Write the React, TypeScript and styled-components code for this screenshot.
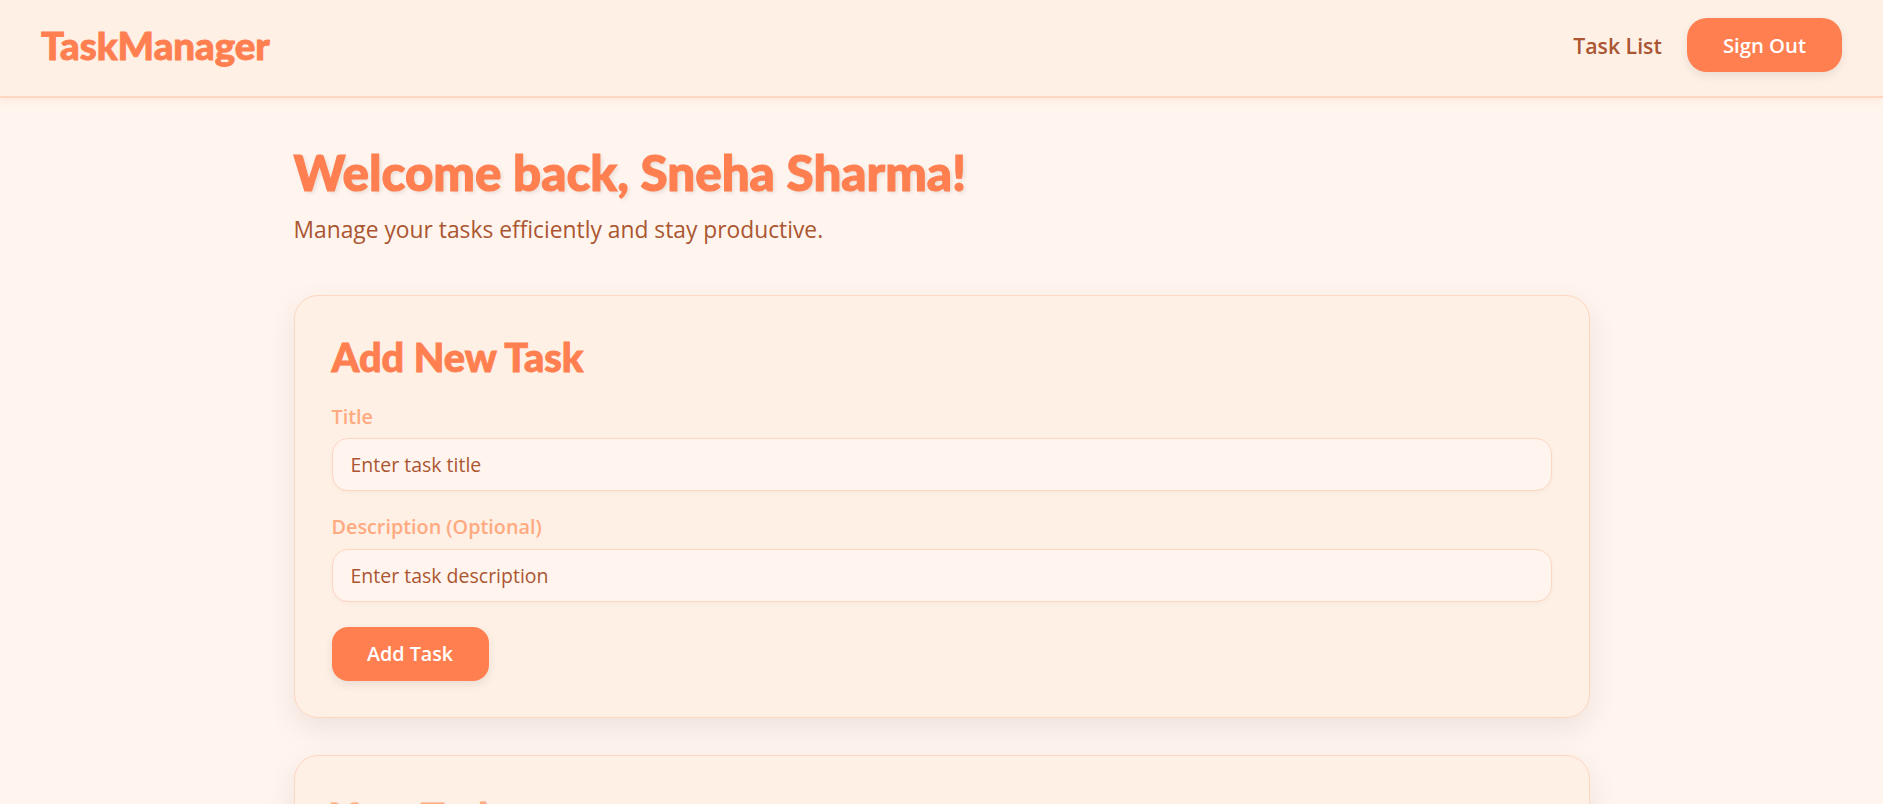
import React from "react";
import styled, { createGlobalStyle } from "styled-components";

const CORAL = "#ff7f50";
const SALMON = "#ffaa80";
const SIENNA = "#ab5632";
const PEACH_BORDER = "#ffd6c0";
const PANEL = "#fff0e6";
const PAGE = "#fff5ee";

const GlobalStyle = createGlobalStyle`
  * { box-sizing: border-box; }
  html, body { margin: 0; padding: 0; }
  body {
    background: ${PAGE};
    font-family: "Open Sans", "Noto Sans", sans-serif;
    color: ${SIENNA};
  }
`;

const Header = styled.header`
  display: flex;
  justify-content: space-between;
  align-items: center;
  padding: 18px 41px 24px 41px;
  background: ${PANEL};
  border-bottom: 2px solid ${PEACH_BORDER};
  box-shadow: 0 2px 8px rgba(255, 127, 80, 0.12);
`;

const Logo = styled.div`
  font-family: "Lato", "Open Sans", sans-serif;
  font-weight: 900;
  font-size: 38.4px;
  line-height: 1.2;
  color: ${CORAL};
  -webkit-text-stroke: 0.9px ${CORAL};
`;

const Nav = styled.nav`
  display: flex;
  align-items: center;
  gap: 25px;
`;

const NavLink = styled.a`
  font-weight: 600;
  font-size: 21.3px;
  color: ${SIENNA};
  text-decoration: none;
  cursor: pointer;
`;

const PrimaryButton = styled.button<{ $radius: number; $size: number; $padX: number }>`
  height: 54px;
  padding: 0 ${(p) => p.$padX}px;
  border: none;
  border-radius: ${(p) => p.$radius}px;
  background: ${CORAL};
  color: #ffffff;
  font-family: "Open Sans", "Noto Sans", sans-serif;
  font-weight: 600;
  font-size: ${(p) => p.$size}px;
  cursor: pointer;
  box-shadow: 0 4px 10px rgba(0, 0, 0, 0.08);
`;

const Main = styled.main`
  max-width: 1296px;
  margin: 0 auto;
  padding: 45px 0 60px;
`;

const Welcome = styled.h1`
  margin: 0;
  font-family: "Lato", "Open Sans", sans-serif;
  font-weight: 900;
  font-size: 49.3px;
  line-height: 1.2;
  color: ${CORAL};
  -webkit-text-stroke: 1.1px ${CORAL};
  text-shadow: 2px 2px 4px rgba(0, 0, 0, 0.1);
`;

const Subtitle = styled.p`
  margin: 10.6px 0 0;
  font-size: 22.8px;
  line-height: 1.5;
  color: ${SIENNA};
`;

const Card = styled.section<{ $gap: number }>`
  margin-top: ${(p) => p.$gap}px;
  background: ${PANEL};
  border: 1px solid ${PEACH_BORDER};
  border-radius: 24px;
  padding: 37px 37px 36px;
  box-shadow: 0 10px 30px rgba(0, 0, 0, 0.08);
`;

const CardTitle = styled.h2<{ $color: string }>`
  margin: 0 0 22px;
  font-family: "Lato", "Open Sans", sans-serif;
  font-weight: 900;
  font-size: 39.7px;
  line-height: 1.2;
  color: ${(p) => p.$color};
  -webkit-text-stroke: 0.9px ${(p) => p.$color};
`;

const Form = styled.form`
  display: flex;
  flex-direction: column;
  align-items: flex-start;
`;

const Field = styled.div`
  display: flex;
  flex-direction: column;
  width: 100%;
  margin-bottom: 22px;
`;

const Label = styled.label`
  font-weight: 600;
  font-size: 19.8px;
  line-height: 1.4;
  color: ${SALMON};
  margin-bottom: 8px;
`;

const Input = styled.input`
  width: 100%;
  height: 53px;
  padding: 0 18px;
  border: 1.5px solid ${PEACH_BORDER};
  border-radius: 16px;
  background: ${PAGE};
  font-family: "Open Sans", "Noto Sans", sans-serif;
  font-size: 19.5px;
  color: ${SIENNA};
  box-shadow: 0 2px 4px rgba(0, 0, 0, 0.03);
  outline: none;
  &::placeholder {
    color: ${SIENNA};
    opacity: 1;
  }
`;

const SubmitRow = styled.div`
  margin-top: 3px;
`;

const EmptyText = styled.p`
  margin: 0;
  font-size: 19.5px;
  color: ${SIENNA};
`;

export default function App() {
  return (
    <>
      <GlobalStyle />
      <Header>
        <Logo>TaskManager</Logo>
        <Nav>
          <NavLink>Task List</NavLink>
          <PrimaryButton $radius={20} $size={20.3} $padX={36}>
            Sign Out
          </PrimaryButton>
        </Nav>
      </Header>
      <Main>
        <Welcome>Welcome back, Sneha Sharma!</Welcome>
        <Subtitle>Manage your tasks efficiently and stay productive.</Subtitle>

        <Card $gap={48}>
          <CardTitle $color={CORAL}>Add New Task</CardTitle>
          <Form onSubmit={(e) => e.preventDefault()}>
            <Field>
              <Label htmlFor="title">Title</Label>
              <Input id="title" placeholder="Enter task title" />
            </Field>
            <Field>
              <Label htmlFor="desc">Description (Optional)</Label>
              <Input id="desc" placeholder="Enter task description" />
            </Field>
            <SubmitRow>
              <PrimaryButton type="submit" $radius={16} $size={19.7} $padX={35.5}>
                Add Task
              </PrimaryButton>
            </SubmitRow>
          </Form>
        </Card>

        <Card $gap={37}>
          <CardTitle $color={SALMON}>Your Tasks</CardTitle>
          <EmptyText>No tasks yet. Add your first task above!</EmptyText>
        </Card>
      </Main>
    </>
  );
}
